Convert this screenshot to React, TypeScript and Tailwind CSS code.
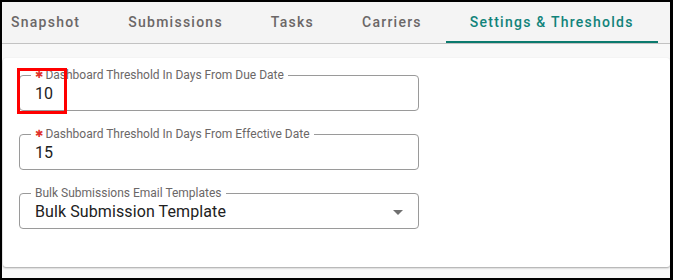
import React from 'react'

const tabs = ['Snapshot', 'Submissions', 'Tasks', 'Carriers', 'Settings & Thresholds']

function Tab({ label, active, first }: { label: string; active: boolean; first: boolean }) {
  return (
    <div
      className={`relative flex h-full items-center ${first ? 'pl-[9px] pr-6' : 'px-6'} text-[14px] font-medium tracking-[1.25px] ${
        active ? 'text-[#11837a]' : 'text-[#6b6767]'
      }`}
    >
      {label}
      {active && <div className="absolute bottom-0 left-0 right-0 h-[2px] bg-[#0b7a6e]" />}
    </div>
  )
}

function Field({
  label,
  value,
  required,
  select,
  marked,
}: {
  label: string
  value: string
  required?: boolean
  select?: boolean
  marked?: boolean
}) {
  return (
    <div className="relative w-[400px]">
      <fieldset className="rounded-[4px] border border-[#9a9a9a] pl-[15px] pr-[15px] pb-[4px]">
        <legend className="ml-[-4px] flex h-[14px] items-center px-1 text-[12px] leading-[14px] text-[#6b6767]">
          {required && (
            <span className="mr-[2px] font-['DejaVu_Sans'] text-[10px] leading-none text-[#e0322c]">✱</span>
          )}
          {label}
        </legend>
        <div className="flex h-[24px] items-center justify-between text-[16px] tracking-[0.1px] text-[#212121]">
          <span>{value}</span>
          {select && (
            <svg width="10" height="5" viewBox="0 0 10 5">
              <path d="M0 0 L10 0 L5 5 Z" fill="#707070" />
            </svg>
          )}
        </div>
      </fieldset>
      {marked && (
        <div className="absolute left-[-2px] top-0 h-[46px] w-[50px] border-[3px] border-[#ff0000]" />
      )}
    </div>
  )
}

export default function App() {
  return (
    <div className="flex h-[280px] w-[673px] flex-col border-b-2 border-l-2 border-r-[3px] border-t-2 border-black bg-[#f8f8f8] font-['Roboto',sans-serif]">
      {/* Tabs */}
      <div className="flex h-[42px] shrink-0 border-b border-[#c2c2c2] bg-[#f4f4f4]">
        {tabs.map((t, i) => (
          <Tab key={t} label={t} active={i === tabs.length - 1} first={i === 0} />
        ))}
      </div>

      {/* Card */}
      <div className="pt-[14px] pl-px">
        <div className="flex h-[209px] flex-col gap-4 rounded-[3px] bg-white px-4 pt-[10px] shadow-[0_1px_2px_rgba(0,0,0,0.35)]">
          <Field label="Dashboard Threshold In Days From Due Date" value="10" required marked />
          <Field label="Dashboard Threshold In Days From Effective Date" value="15" required />
          <Field label="Bulk Submissions Email Templates" value="Bulk Submission Template" select />
        </div>
      </div>
    </div>
  )
}
